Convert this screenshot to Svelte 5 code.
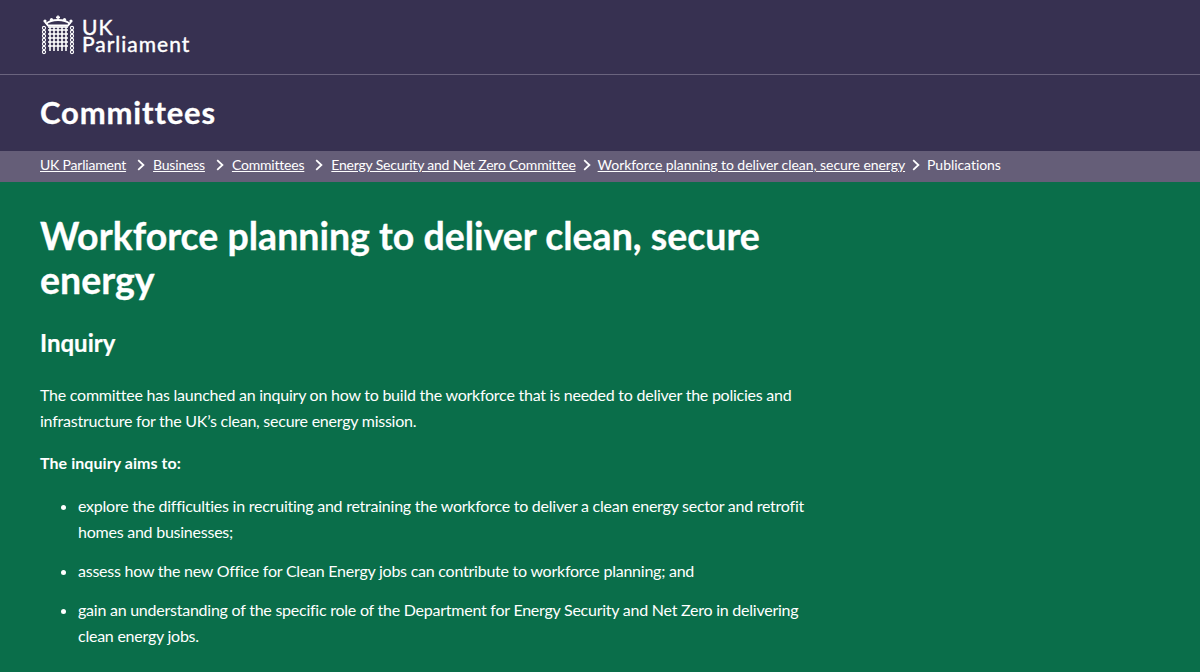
<script lang="ts">
	const crumbs = [
		'UK Parliament',
		'Business',
		'Committees',
		'Energy Security and Net Zero Committee',
		'Workforce planning to deliver clean, secure energy'
	];
	const aims = [
		'explore the difficulties in recruiting and retraining the workforce to deliver a clean energy sector and retrofit homes and businesses;',
		'assess how the new Office for Clean Energy jobs can contribute to workforce planning; and',
		'gain an understanding of the specific role of the Department for Energy Security and Net Zero in delivering clean energy jobs.'
	];
	const bars = [9, 13, 17, 21, 25];
	const rails = [15, 19, 23, 27, 31];
	const links = [13, 17, 21, 25, 29, 33, 37];
</script>

<div class="page">
	<header class="top">
		<div class="brand">
			<svg class="crest" width="34" height="40" viewBox="0 0 34 40" fill="none" stroke="#fff">
				<!-- crown -->
				<path d="M5 9c3-3 7-4 12-4s9 1 12 4" stroke-width="1.8" />
				<path d="M17 0.5v5M15 2.4h4" stroke-width="1.6" />
				<path d="M4 7l3 3.5h20l3-3.5" stroke-width="1.8" />
				<circle cx="4" cy="6" r="1.6" fill="#fff" stroke="none" />
				<circle cx="30" cy="6" r="1.6" fill="#fff" stroke="none" />
				<circle cx="10.5" cy="4.5" r="1.6" fill="#fff" stroke="none" />
				<circle cx="23.5" cy="4.5" r="1.6" fill="#fff" stroke="none" />
				<!-- portcullis -->
				<path d="M7 12h20" stroke-width="1.6" />
				{#each rails as y}<path d="M7 {y}h20" stroke-width="1.5" />{/each}
				{#each bars as x}<path d="M{x} 12v24" stroke-width="1.6" />{/each}
				<!-- chains -->
				{#each links as y}
					<circle cx="3" cy={y} r="1.6" stroke-width="1.1" />
					<circle cx="31" cy={y} r="1.6" stroke-width="1.1" />
				{/each}
			</svg>
			<div class="wordmark">UK Parliament</div>
		</div>
		<div class="section"><span>Committees</span></div>
	</header>

	<nav class="crumbs">
		{#each crumbs as c}
			<a href="#top">{c}</a>
			<svg class="chev" width="8" height="12" viewBox="0 0 8 12" fill="none" stroke="#fff" stroke-width="1.8"><path d="M1.2 1.2L6.4 6l-5.2 4.8" /></svg>
		{/each}
		<span>Publications</span>
	</nav>

	<main class="body">
		<h1>Workforce planning to deliver clean, secure energy</h1>
		<h2>Inquiry</h2>
		<p>The committee has launched an inquiry on how to build the workforce that is needed to deliver the policies and infrastructure for the UK’s clean, secure energy mission.</p>
		<p class="lead">The inquiry aims to:</p>
		<ul>
			{#each aims as a}<li>{a}</li>{/each}
		</ul>
	</main>
</div>

<style>
	:global(body) {
		margin: 0;
		background: #0a6e4a;
	}
	.page {
		height: 672px;
		overflow: hidden;
		font-family: Lato, "Noto Sans", sans-serif;
		color: #fff;
		background: #0a6e4a;
	}
	.top {
		background: #373151;
	}
	.brand {
		height: 75px;
		box-sizing: border-box;
		padding: 15px 0 0 41px;
		display: flex;
		gap: 7px;
		border-bottom: 1px solid #6a647e;
	}
	.wordmark {
		width: 114px;
		font-size: 21px;
		line-height: 17px;
		letter-spacing: 1px;
		margin-top: 3px;
		-webkit-text-stroke: 0.4px #fff;
	}
	.section {
		height: 76px;
		box-sizing: border-box;
		padding: 19px 40px 0;
		font-size: 31px;
		line-height: 36px;
		font-weight: 700;
		letter-spacing: 0.85px;
		-webkit-text-stroke: 0.3px #fff;
	}
	.crumbs {
		height: 31px;
		background: #655e78;
		display: flex;
		align-items: center;
		padding: 0 40px 4px;
		box-sizing: border-box;
		font-size: 14px;
		letter-spacing: -0.2px;
	}
	.crumbs a {
		color: #fff;
		text-decoration: underline;
	}
	.crumbs span {
		letter-spacing: -0.05px;
	}
	.crumbs a:nth-of-type(5) {
		letter-spacing: -0.06px;
	}
	.chev {
		margin: 0 8px 0 11px;
	}
	.crumbs a:nth-of-type(n+4) + .chev {
		margin: 0 7px;
	}
	.body {
		padding: 32px 40px 0;
		width: 770px;
		box-sizing: content-box;
	}
	h1 {
		margin: 0;
		font-size: 37.5px;
		line-height: 44px;
		font-weight: 700;
		max-width: 740px;
		-webkit-text-stroke: 0.3px #fff;
	}
	h2 {
		margin: 26px 0 0;
		font-size: 24px;
		line-height: 30px;
		font-weight: 700;
		-webkit-text-stroke: 0.2px #fff;
	}
	p {
		margin: 24px 0 0;
		font-size: 16px;
		line-height: 26px;
		letter-spacing: -0.24px;
	}
	.lead {
		margin-top: 16px;
		font-weight: 700;
		letter-spacing: 0.06px;
	}
	ul {
		margin: 17px 0 0;
		padding: 0 0 0 38px;
		font-size: 16px;
		line-height: 26px;
		letter-spacing: -0.24px;
	}
	li {
		margin-bottom: 13px;
	}
</style>
